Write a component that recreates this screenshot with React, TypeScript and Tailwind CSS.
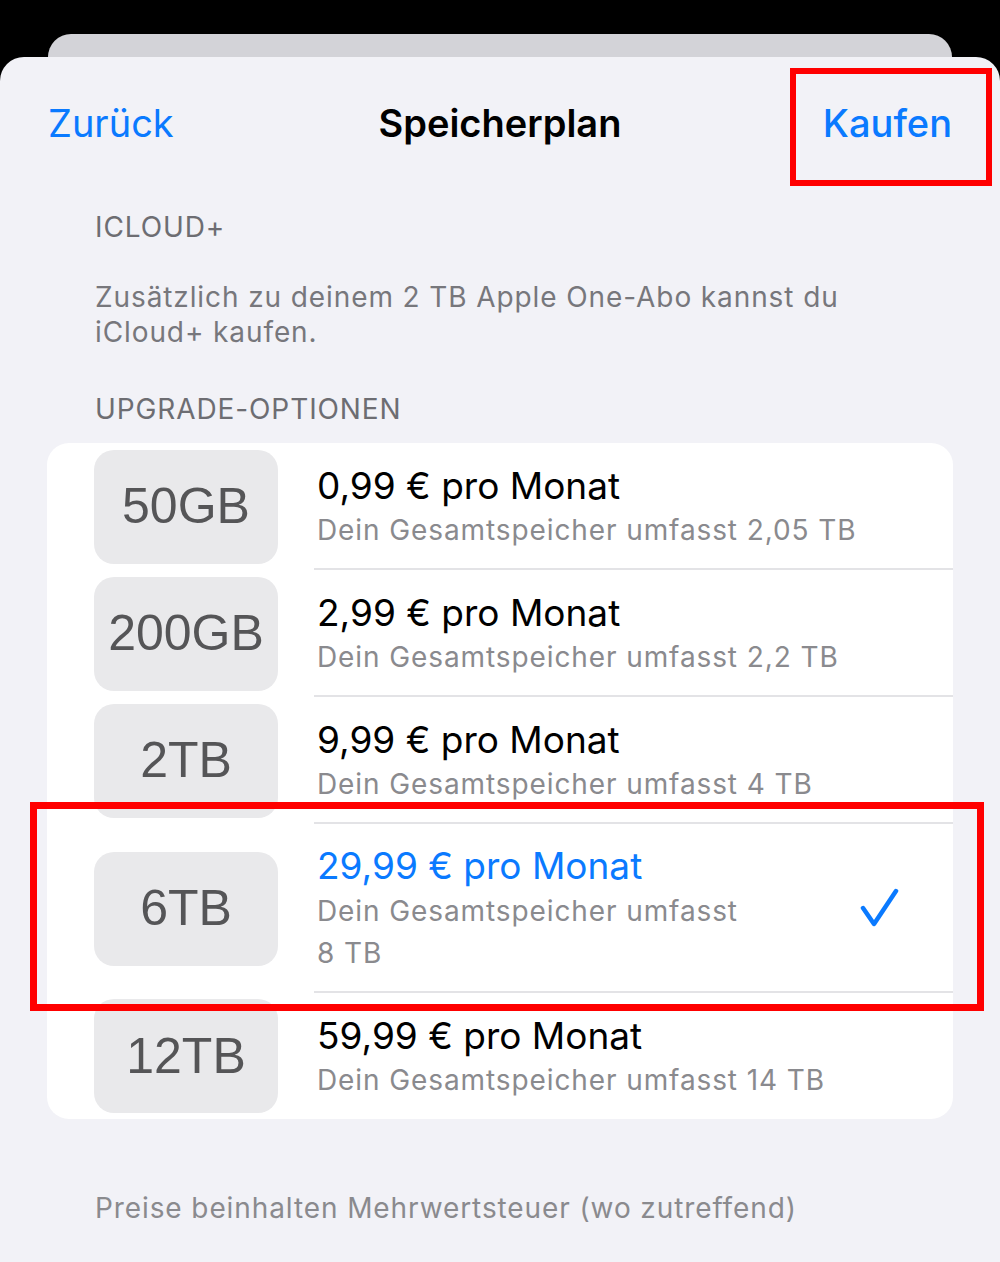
const plans = [
  { size: "50GB", price: "0,99 € pro Monat", total: "Dein Gesamtspeicher umfasst 2,05 TB" },
  { size: "200GB", price: "2,99 € pro Monat", total: "Dein Gesamtspeicher umfasst 2,2 TB" },
  { size: "2TB", price: "9,99 € pro Monat", total: "Dein Gesamtspeicher umfasst 4 TB" },
  { size: "6TB", price: "29,99 € pro Monat", total: "Dein Gesamtspeicher umfasst 8\u00a0TB", selected: true },
  { size: "12TB", price: "59,99 € pro Monat", total: "Dein Gesamtspeicher umfasst 14 TB" },
];

const sf = { fontFamily: "Inter, 'Liberation Sans', sans-serif" };

const App = () => {
  return (
    <div className="relative flex h-[1262px] w-[1000px] flex-col overflow-hidden bg-black pt-[34px]" style={sf}>
      <div className="mx-[48px] h-[23px] shrink-0 rounded-t-[26px] bg-[#d3d3d8]" />

      <div className="flex-1 rounded-t-[24px] bg-[#f2f2f7]">
        <div className="grid h-[132px] grid-cols-3 items-center px-[48px]">
          <span className="text-[38px] text-[#0a7aff]">Zurück</span>
          <span className="text-center text-[38px] font-semibold text-black">Speicherplan</span>
          <span className="text-right text-[38px] font-medium text-[#0a7aff]">Kaufen</span>
        </div>

        <div className="px-[95px] pt-[21px] text-[28px] tracking-[0.9px] text-[#6d6d72]">
          <p className="leading-[34px]">ICLOUD+</p>
          <p className="mt-[36px] leading-[35px] text-[#77777c]">
            Zusätzlich zu deinem 2 TB Apple One-Abo kannst du
            <br />
            iCloud+ kaufen.
          </p>
          <p className="mt-[42px] leading-[34px]">UPGRADE-OPTIONEN</p>
        </div>

        <div className="mx-[47px] mt-[17px] rounded-[22px] bg-white">
          {plans.map((p, i) => (
            <div
              key={p.size}
              className={`flex items-center ${p.selected ? "h-[169px]" : i === 4 ? "h-[126px]" : "h-[127px]"}`}
            >
              <div className="ml-[47px] flex h-[114px] w-[184px] shrink-0 items-center justify-center rounded-[20px] bg-[#e9e9eb]">
                <span className="text-[50px] text-[#555557]" style={{ fontFamily: "'Liberation Sans', Arial, sans-serif" }}>
                  {p.size}
                </span>
              </div>
              <div
                className={`ml-[36px] flex h-full flex-1 items-center ${i < 4 ? "border-b-2 border-[#e3e3e6]" : ""}`}
              >
                <div className="flex flex-1 flex-col pl-[3px]">
                  <span className={`text-[37px] leading-[48px] ${p.selected ? "text-[#0a7aff]" : "text-black"}`}>
                    {p.price}
                  </span>
                  <span
                    className={`text-[28px] tracking-[0.9px] text-[#8a8a8e] ${p.selected ? "w-[450px] leading-[42px]" : "leading-[40px]"}`}
                  >
                    {p.total}
                  </span>
                </div>
                {p.selected && (
                  <svg width="40" height="40" viewBox="0 0 40 40" className="mr-[54px]" fill="none">
                    <path d="M4 20 L15 36 L37 3" stroke="#0a7aff" strokeWidth="4.5" strokeLinecap="round" strokeLinejoin="round" />
                  </svg>
                )}
              </div>
            </div>
          ))}
        </div>

        <p className="mt-[72px] px-[95px] text-[28px] leading-[34px] tracking-[0.9px] text-[#8a8a8e]">
          Preise beinhalten Mehrwertsteuer (wo zutreffend)
        </p>
      </div>

      <div className="absolute left-[790px] top-[68px] h-[118px] w-[202px] border-[6px] border-[#ff0000]" />
      <div className="absolute left-[30px] top-[802px] h-[209px] w-[954px] border-[7px] border-[#ff0000]" />
    </div>
  );
};

export default App;
